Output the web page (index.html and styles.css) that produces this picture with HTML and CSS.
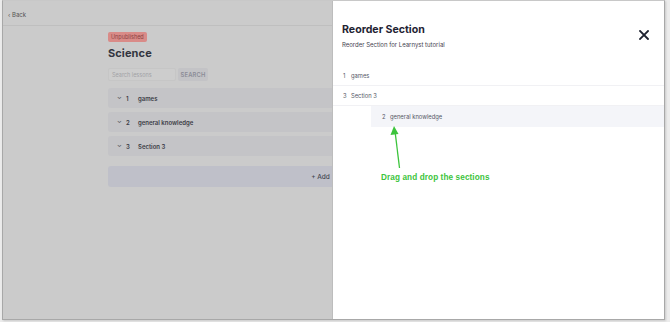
FILE: index.html
```html
<!DOCTYPE html>
<html>
<head>
<meta charset="utf-8">
<link rel="stylesheet" href="styles.css">
</head>
<body>
<div class="frame">
  <div class="page">
    <div class="topbar"><span class="back">‹ Back</span></div>
    <div class="content">
      <div class="badge">Unpublished</div>
      <h1 class="title">Science</h1>
      <div class="search">
        <div class="search-input">Search lessons</div>
        <div class="search-btn">SEARCH</div>
      </div>
      <div class="sections">
        <div class="sec"><span class="chev">⌄</span><span class="num">1</span><span class="name">games</span></div>
        <div class="sec"><span class="chev">⌄</span><span class="num">2</span><span class="name">general knowledge</span></div>
        <div class="sec"><span class="chev">⌄</span><span class="num">3</span><span class="name">Section 3</span></div>
      </div>
      <div class="add">+ Add</div>
    </div>
  </div>
  <div class="panel">
    <div class="panel-head">
      <div>
        <h2 class="panel-title">Reorder Section</h2>
        <p class="panel-sub">Reorder Section for Learnyst tutorial</p>
      </div>
      <svg class="close" width="10" height="10" viewBox="0 0 10 10"><path d="M1 1L9 9M9 1L1 9" stroke="#1e2230" stroke-width="1.8" stroke-linecap="square"/></svg>
    </div>
    <div class="list">
      <div class="item"><span class="inum">1</span><span>games</span></div>
      <div class="item"><span class="inum">3</span><span>Section 3</span></div>
      <div class="item dragging"><span class="inum">2</span><span>general knowledge</span></div>
    </div>
    <svg class="arrow" width="20" height="50" viewBox="0 0 20 50"><path d="M10.5 43L6 6" stroke="#3cc43c" stroke-width="1.3" fill="none"/><path d="M5 1L1.5 10L9.5 9Z" fill="#3cc43c"/></svg>
    <div class="hint">Drag and drop the sections</div>
  </div>
</div>
</body>
</html>
```
FILE: styles.css
```css
* { box-sizing: border-box; }
html, body { margin: 0; padding: 0; }
body {
  background: #ececec;
  width: 670px;
  height: 322px;
  overflow: hidden;
  font-family: "Inter", "Noto Sans", sans-serif;
}
.frame {
  margin-left: 2px;
  width: 663px;
  height: 320px;
  border: 1px solid #a8a8a8;
  border-top-color: #c8c8c8;
  display: flex;
  overflow: hidden;
  box-shadow: 1px 1px 2px rgba(0,0,0,0.15);
}
.page {
  width: 330px;
  flex: none;
  background: #cbcbcb;
  overflow: hidden;
  position: relative;
  border-right: 1px solid #bdbdbd;
}
.topbar {
  height: 25px;
  border-bottom: 1px solid #bfbfbf;
  display: flex;
  align-items: center;
  padding-left: 5px;
}
.back { font-size: 6px; color: #555; padding-top: 3px; }
.content {
  padding-left: 105px;
  padding-top: 6px;
  width: 530px;
}
.badge {
  width: fit-content;
  background: #d98b88;
  color: #8b4444;
  font-size: 5.5px;
  padding: 2.5px 3px;
  border-radius: 2px;
  line-height: 5px;
}
.title {
  margin: 4px 0 0;
  font-size: 11px;
  font-weight: 700;
  color: #333540;
  letter-spacing: 0.1px;
  line-height: 14px;
}
.search { display: flex; gap: 2px; margin-top: 8px; }
.search-input {
  width: 68px; height: 13px;
  border: 1px solid #c6c6c6;
  background: #cdcdcd;
  font-size: 5.5px; color: #a2a2a6;
  padding: 3px 3px;
  border-radius: 2px;
}
.search-btn {
  width: 30px; height: 13px;
  background: #c3c3c6;
  font-size: 5.8px; color: #8b8c96; font-weight: 600;
  display: flex; align-items: center; justify-content: center;
  border-radius: 2px;
  letter-spacing: 0.2px;
}
.sections { margin-top: 7px; display: flex; flex-direction: column; gap: 4px; }
.sec {
  height: 20px;
  background: #c4c4c7;
  border-radius: 3px;
  display: flex;
  align-items: center;
  font-size: 6px;
  color: #3b3c46;
  font-weight: 600;
}
.chev { width: 8px; margin-left: 9px; font-size: 6px; color: #555; line-height: 6px; padding-bottom: 3px; }
.num { width: 12px; margin-left: 1px; }
.add {
  margin-top: 10px;
  height: 21px;
  background: #bfc0c9;
  border-radius: 3px;
  display: flex; align-items: center; justify-content: center;
  font-size: 6.5px; color: #444650;
  font-weight: 500;
}
.panel {
  flex: 1;
  background: #fff;
  position: relative;
}
.panel-head {
  display: flex;
  justify-content: space-between;
  align-items: flex-start;
  padding: 21px 15px 0 9px;
  height: 65px;
}
.panel-title {
  margin: 0;
  font-size: 10.6px;
  font-weight: 700;
  color: #1f2333;
  line-height: 15px;
}
.panel-sub {
  margin: 4px 0 0;
  font-size: 6px;
  color: #3f4250;
}
.close { margin-top: 8px; }
.list { display: flex; flex-direction: column; }
.item {
  height: 20px;
  display: flex;
  align-items: center;
  padding-left: 10px;
  font-size: 5.8px;
  color: #555866;
  border-bottom: 1px solid #f1f1f4;
}
.inum { width: 8px; }
.item.dragging {
  margin-left: 38px;
  height: 21px;
  background: #f4f5f9;
  padding-left: 11px;
  border-bottom: none;
}
.arrow { position: absolute; left: 56px; top: 124px; }
.hint {
  position: absolute;
  left: 48px; top: 172px;
  font-family: "Liberation Sans", Arial, sans-serif;
  font-weight: 700;
  font-size: 8.2px;
  color: #3cc43c;
  letter-spacing: 0.1px;
}
```
